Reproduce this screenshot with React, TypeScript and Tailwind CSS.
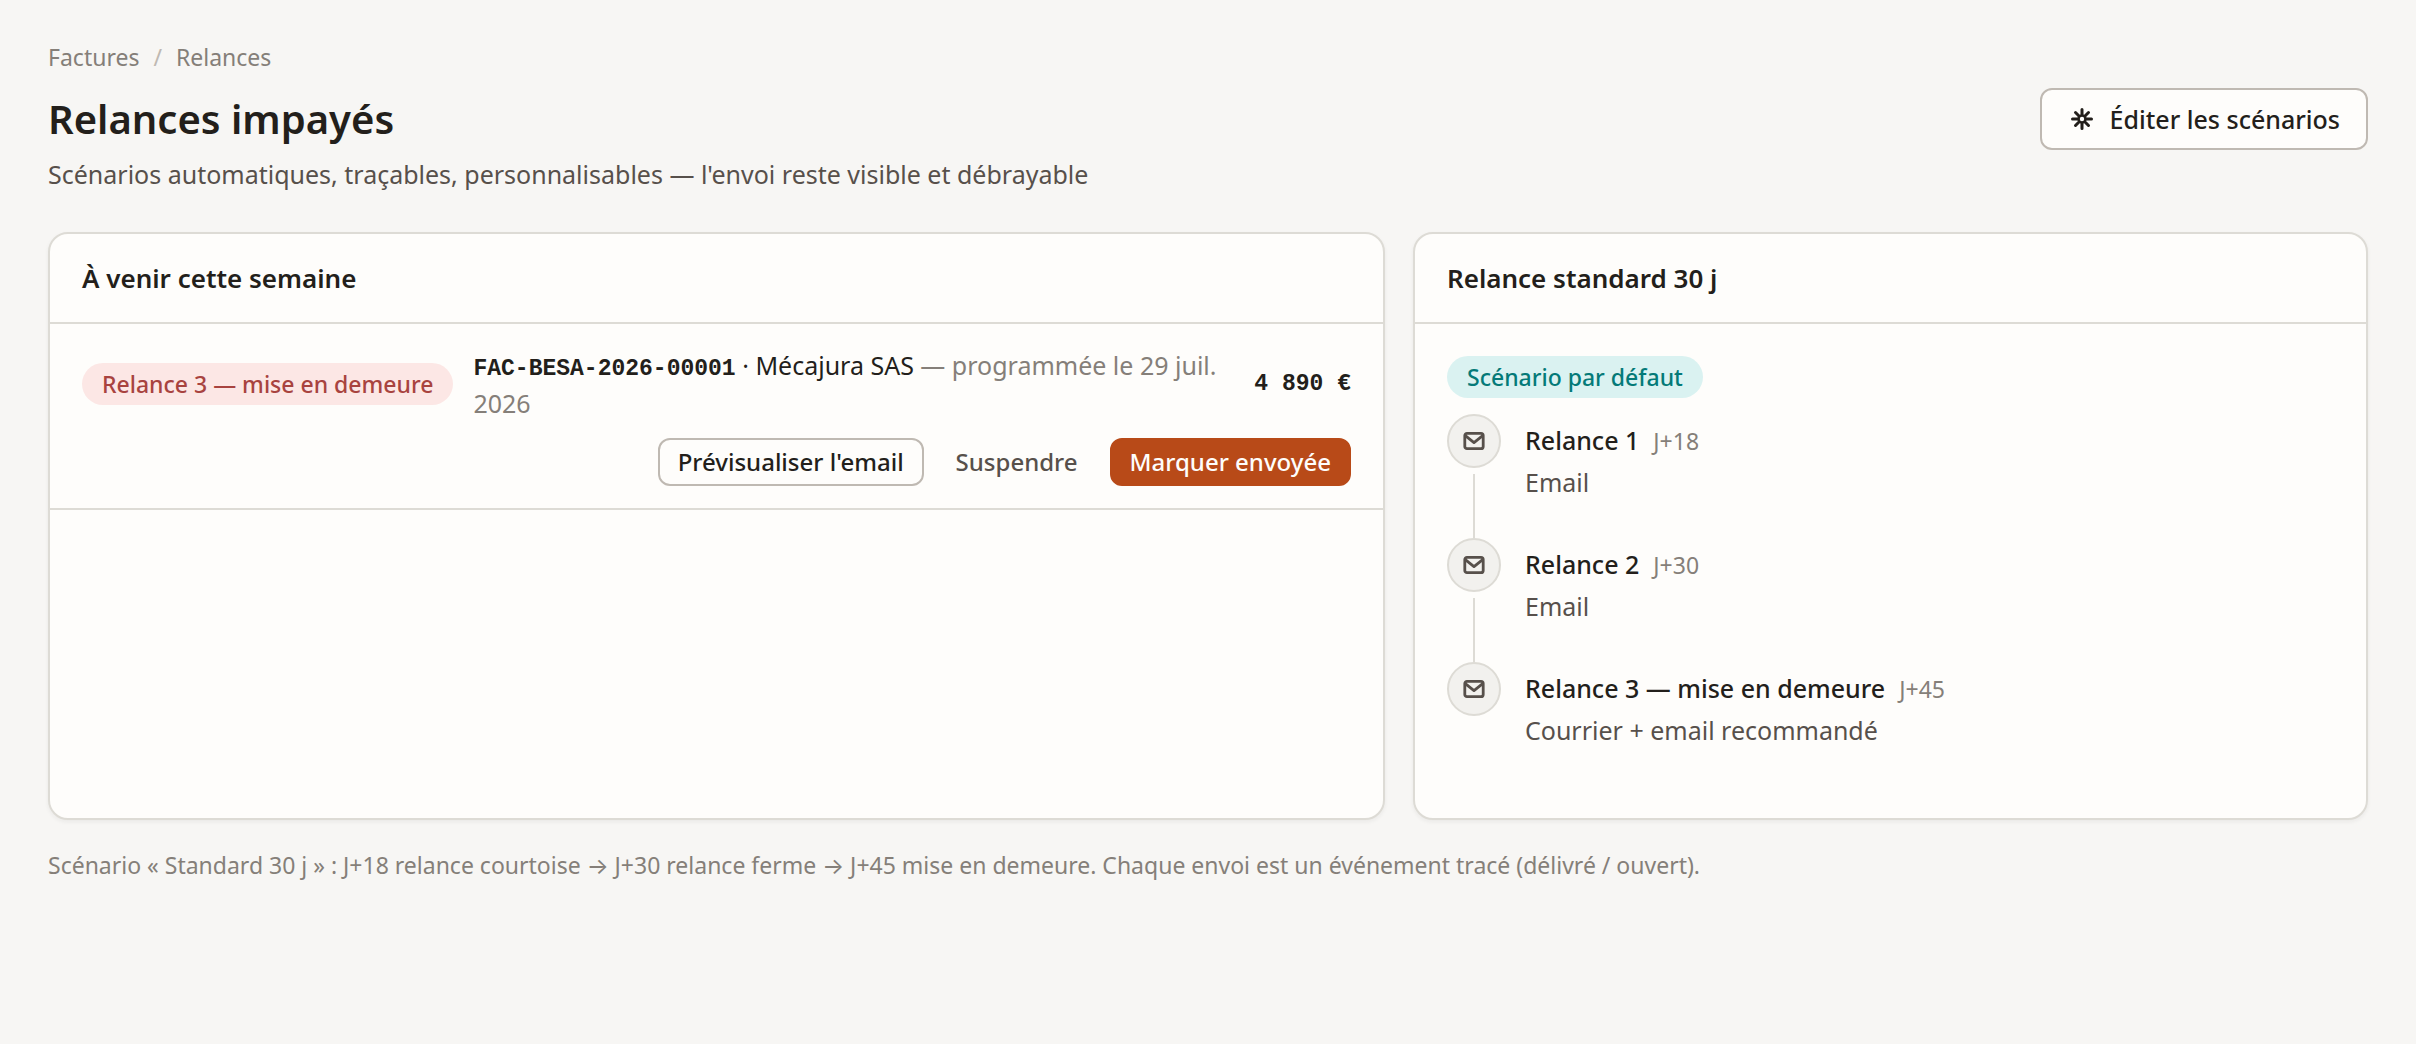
import type { ReactNode } from 'react'

type Step = { title: string; delay: string; channel: string }

type Reminder = {
  step: string
  invoice: string
  client: string
  scheduled: string
  amount: string
}

const STEPS: Step[] = [
  { title: 'Relance 1', delay: 'J+18', channel: 'Email' },
  { title: 'Relance 2', delay: 'J+30', channel: 'Email' },
  { title: 'Relance 3 — mise en demeure', delay: 'J+45', channel: 'Courrier + email recommandé' },
]

const REMINDERS: Reminder[] = [
  {
    step: 'Relance 3 — mise en demeure',
    invoice: 'FAC-BESA-2026-00001',
    client: 'Mécajura SAS',
    scheduled: '29 juil. 2026',
    amount: '4\u00a0890\u00a0€',
  },
]

const BADGE_TONES = {
  danger: 'bg-[#fce7e5] text-[#a8433f]',
  info: 'bg-[#daf2f1] text-[#047a78]',
}

const BUTTON_VARIANTS = {
  outline: 'border-[#bfb9b2] bg-[#fefdfb] text-[#231f1b]',
  ghost: 'border-transparent text-[#57504b]',
  primary: 'border-[#b84a18] bg-[#b84a18] text-[#fefdfb]',
}

function SettingsIcon() {
  return (
    <svg className="size-7" viewBox="0 0 28 28" fill="none" stroke="currentColor" strokeWidth="3" strokeLinecap="round" aria-hidden="true">
      <circle cx="14" cy="14" r="3.5" strokeWidth="2.6" />
      <path d="M14 4.5v4.5M14 19v4.5M4.5 14h4.5M19 14h4.5M7.5 7.5l3 3M17.5 17.5l3 3M7.5 20.5l3-3M17.5 10.5l3-3" />
    </svg>
  )
}

function MailIcon() {
  return (
    <svg className="size-6" viewBox="0 0 24 24" fill="none" stroke="currentColor" strokeWidth="2.8" strokeLinecap="round" strokeLinejoin="round" aria-hidden="true">
      <rect x="2.8" y="4.4" width="18.4" height="15.2" rx="2.2" />
      <path d="M3.6 6.8 12 13.6l8.4-6.8" />
    </svg>
  )
}

function Badge({ tone, children }: { tone: keyof typeof BADGE_TONES; children: string }) {
  return (
    <span className={`inline-block shrink-0 rounded-full px-5 py-1 text-[23px] leading-[34px] font-medium whitespace-nowrap ${BADGE_TONES[tone]}`}>
      {children}
    </span>
  )
}

function SmallButton({ variant, children }: { variant: keyof typeof BUTTON_VARIANTS; children: string }) {
  return (
    <button
      type="button"
      className={`h-12 rounded-xl border-2 px-[18px] text-[24px] leading-[36px] font-medium whitespace-nowrap ${BUTTON_VARIANTS[variant]}`}
    >
      {children}
    </button>
  )
}

function Card({ title, children }: { title: string; children: ReactNode }) {
  return (
    <section className="overflow-hidden rounded-[20px] border-2 border-[#dddbd5] bg-[#fefdfb] shadow-[0_2px_4px_rgba(35,31,27,0.06)]">
      <div className="border-b-2 border-[#dddbd5] px-8 py-6">
        <h2 className="text-[26px] leading-[40px] font-semibold">{title}</h2>
      </div>
      {children}
    </section>
  )
}

function ReminderRow({ r }: { r: Reminder }) {
  return (
    <li className="border-b-2 border-[#dddbd5] px-8 py-[22px]">
      <div className="flex items-center gap-5">
        <Badge tone="danger">{r.step}</Badge>
        <p className="min-w-0 flex-1 text-[25px] leading-[38px]">
          <span className="font-['Liberation_Mono',monospace] text-[23px] leading-none font-semibold">{r.invoice}</span>
          {' · '}
          {r.client}
          <span className="text-[#857f79]"> — programmée le {r.scheduled}</span>
        </p>
        <span className="font-['Liberation_Mono',monospace] text-[23px] leading-[38px] font-semibold whitespace-nowrap">
          {r.amount}
        </span>
      </div>
      <div className="mt-4 flex justify-end gap-3">
        <SmallButton variant="outline">Prévisualiser l'email</SmallButton>
        <SmallButton variant="ghost">Suspendre</SmallButton>
        <SmallButton variant="primary">Marquer envoyée</SmallButton>
      </div>
    </li>
  )
}

function StepItem({ step, last }: { step: Step; last: boolean }) {
  return (
    <li className="flex gap-6">
      <div className="flex flex-col items-center">
        <span className="flex size-[54px] items-center justify-center rounded-full border-2 border-[#dddbd5] bg-[#f2f1ee] text-[#57504b]">
          <MailIcon />
        </span>
        {!last && <span className="mt-1.5 w-0.5 flex-1 bg-[#dddbd5]" />}
      </div>
      <div className="pt-1.5 pb-9">
        <div className="flex items-baseline gap-3.5 text-[25px] leading-[40px]">
          <span className="font-medium">{step.title}</span>
          <span className="text-[23px] leading-none text-[#857f79]">{step.delay}</span>
        </div>
        <p className="mt-0.5 text-[25px] leading-[40px] text-[#57504b]">{step.channel}</p>
      </div>
    </li>
  )
}

export default function App() {
  return (
    <main className="min-h-screen bg-[#f7f6f4] px-12 py-10 font-['Noto_Sans',Inter,sans-serif] text-[#231f1b]">
      <nav aria-label="Fil d'Ariane" className="mb-3.5 flex gap-3.5 text-[23px] leading-[34px] text-[#857f79]">
        <a href="#factures">Factures</a>
        <span className="text-[#bfb9b2]">/</span>
        <span>Relances</span>
      </nav>

      <header className="mb-[38px]">
        <div className="flex items-center justify-between gap-6">
          <h1 className="text-[40px] leading-[48px] font-semibold">Relances impayés</h1>
          <button
            type="button"
            className="flex h-[62px] items-center gap-3.5 rounded-xl border-2 border-[#bfb9b2] bg-[#fefdfb] px-[26px] text-[25px] leading-[38px] font-medium"
          >
            <SettingsIcon />
            Éditer les scénarios
          </button>
        </div>
        <p className="mt-1 text-[25px] leading-[40px] text-[#57504b]">
          Scénarios automatiques, traçables, personnalisables — l'envoi reste visible et débrayable
        </p>
      </header>

      <div className="grid grid-cols-[1.4fr_1fr] gap-7">
        <Card title="À venir cette semaine">
          <ul>
            {REMINDERS.map((r) => (
              <ReminderRow key={r.invoice} r={r} />
            ))}
          </ul>
        </Card>

        <Card title="Relance standard 30 j">
          <div className="flex flex-col items-start gap-4 p-8">
            <Badge tone="info">Scénario par défaut</Badge>
            <ol>
              {STEPS.map((step, i) => (
                <StepItem key={step.title} step={step} last={i === STEPS.length - 1} />
              ))}
            </ol>
          </div>
        </Card>
      </div>

      <p className="mt-7 text-[23px] leading-[34px] text-[#857f79]">
        Scénario « Standard 30 j » : J+18 relance courtoise → J+30 relance ferme → J+45 mise en demeure. Chaque envoi est
        un événement tracé (délivré / ouvert).
      </p>
    </main>
  )
}
